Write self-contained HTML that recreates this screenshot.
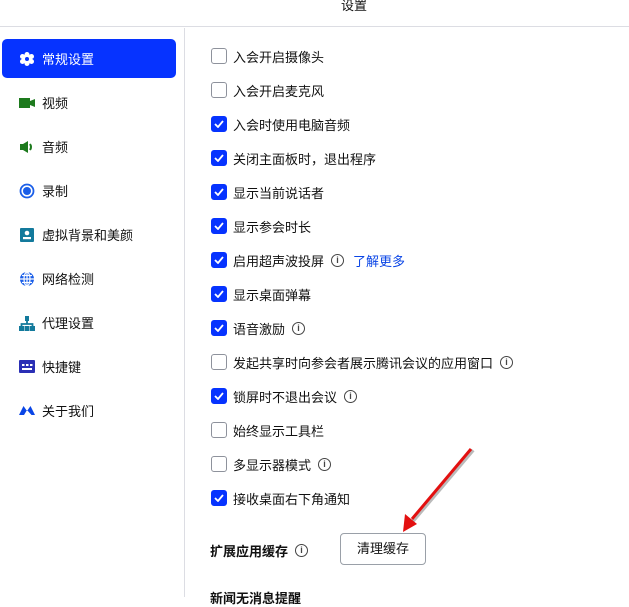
<!DOCTYPE html>
<html><head><meta charset="utf-8"><style>
*{margin:0;padding:0;box-sizing:border-box}
body{width:629px;height:597px;overflow:hidden;background:#fff;font-family:"Liberation Sans","Noto Sans CJK SC",sans-serif;font-size:13px;color:#111;position:relative}
.hdr{position:absolute;left:0;top:0;width:629px;height:27px;border-bottom:1px solid #dcdde3}
.hdr span{position:absolute;left:341px;top:-5px;font-size:13px}
.side{position:absolute;left:0;top:28px;width:185px;height:569px;border-right:1px solid #dcdde3}
.it{position:absolute;left:2px;width:174px;height:39px;display:flex;align-items:center;padding-left:17px}
.it .ic{width:16px;height:16px;margin-right:7px;display:flex;align-items:center;justify-content:center}
.act{background:#0633ff;color:#fff;border-radius:5px}
.row{position:absolute;left:211px;display:flex;align-items:center;height:18px}
.cb{width:16px;height:16px;border:1.5px solid #8e929c;border-radius:3px;margin-right:6px;background:#fff}
.cb.on{background:#0633ff;border-color:#0633ff;display:flex;align-items:center;justify-content:center}
.info{display:inline-block;width:13px;height:13px;border:1.5px solid #444;border-radius:50%;margin-left:7px;font-size:9px;line-height:10px;text-align:center;font-weight:bold;color:#444}
.link{color:#0a45e6;margin-left:9px}
.btn{position:absolute;left:340px;top:533px;width:86px;height:32px;border:1px solid #9aa0a8;border-radius:4px;text-align:center;line-height:30px}
</style></head><body>
<div class="hdr"><span>设置</span></div>
<div class="side">
<div class="it act" style="top:11px"><div class="ic"><svg width="16" height="16"><g fill="#fff"><circle cx="8" cy="8" r="5"/><circle cx="8" cy="3.5" r="2.5"/><circle cx="8" cy="12.5" r="2.5"/><circle cx="3.5" cy="5.5" r="2.5"/><circle cx="12.5" cy="5.5" r="2.5"/><circle cx="3.5" cy="10.5" r="2.5"/><circle cx="12.5" cy="10.5" r="2.5"/></g><circle cx="8" cy="8" r="2" fill="#0633ff"/></svg></div>常规设置</div>
<div class="it" style="top:55px"><div class="ic"><svg width="16" height="12"><rect x="0" y="1" width="11" height="10" fill="#1d7a1d"/><path d="M11 4l5-2v8l-5-2z" fill="#1d7a1d"/></svg></div>视频</div>
<div class="it" style="top:99px"><div class="ic"><svg width="16" height="16"><path d="M1 5h3l5-3v12l-5-3H1z" fill="#1d7a1d"/><path d="M11 5q2 3 0 6" stroke="#1d7a1d" stroke-width="2" fill="none"/></svg></div>音频</div>
<div class="it" style="top:143px"><div class="ic"><svg width="16" height="16"><circle cx="8" cy="8" r="6.5" fill="none" stroke="#1a5ee8" stroke-width="1.8"/><circle cx="8" cy="8" r="4" fill="#1a5ee8"/></svg></div>录制</div>
<div class="it" style="top:187px"><div class="ic"><svg width="16" height="16"><rect x="1" y="1" width="14" height="14" rx="1" fill="#137a9c"/><circle cx="8" cy="6" r="2.3" fill="#fff"/><rect x="4" y="10" width="8" height="2.2" fill="#fff"/></svg></div>虚拟背景和美颜</div>
<div class="it" style="top:231px"><div class="ic"><svg width="16" height="16"><circle cx="8" cy="8" r="7" fill="#1a5ee8"/><path d="M1 8h14M8 1v14M3 4.5h10M3 11.5h10" stroke="#fff" stroke-width="1.2"/><ellipse cx="8" cy="8" rx="3" ry="7" fill="none" stroke="#fff" stroke-width="1.2"/></svg></div>网络检测</div>
<div class="it" style="top:275px"><div class="ic"><svg width="16" height="16"><rect x="6" y="1" width="4" height="5" fill="#137a9c"/><path d="M8 6v3M2.5 11V9h11v2" stroke="#137a9c" stroke-width="1.8" fill="none"/><rect x="0" y="11" width="5" height="5" fill="#137a9c"/><rect x="5.5" y="11" width="5" height="5" fill="#137a9c"/><rect x="11" y="11" width="5" height="5" fill="#137a9c"/></svg></div>代理设置</div>
<div class="it" style="top:319px"><div class="ic"><svg width="16" height="13"><rect x="0" y="0" width="16" height="13" rx="1" fill="#2a2fb5"/><rect x="3" y="4" width="2.5" height="2" fill="#fff"/><rect x="7" y="4" width="2.5" height="2" fill="#fff"/><rect x="11" y="4" width="2.5" height="2" fill="#fff"/><rect x="3" y="8" width="10" height="2" fill="#fff"/></svg></div>快捷键</div>
<div class="it" style="top:363px"><div class="ic"><svg width="16" height="11"><path d="M0 10L4.5 1 8 6l3.5-5L16 10h-3.5L8 5l-3 5z" fill="#0a45e6"/></svg></div>关于我们</div>
</div>

<div class="row" style="top:47px"><div class="cb"></div>入会开启摄像头</div>
<div class="row" style="top:81px"><div class="cb"></div>入会开启麦克风</div>
<div class="row" style="top:115px"><div class="cb on"><svg width="10" height="8"><path d="M1 4l3 3 5-6" stroke="#fff" stroke-width="1.8" fill="none"/></svg></div>入会时使用电脑音频</div>
<div class="row" style="top:149px"><div class="cb on"><svg width="10" height="8"><path d="M1 4l3 3 5-6" stroke="#fff" stroke-width="1.8" fill="none"/></svg></div>关闭主面板时，退出程序</div>
<div class="row" style="top:183px"><div class="cb on"><svg width="10" height="8"><path d="M1 4l3 3 5-6" stroke="#fff" stroke-width="1.8" fill="none"/></svg></div>显示当前说话者</div>
<div class="row" style="top:217px"><div class="cb on"><svg width="10" height="8"><path d="M1 4l3 3 5-6" stroke="#fff" stroke-width="1.8" fill="none"/></svg></div>显示参会时长</div>
<div class="row" style="top:251px"><div class="cb on"><svg width="10" height="8"><path d="M1 4l3 3 5-6" stroke="#fff" stroke-width="1.8" fill="none"/></svg></div>启用超声波投屏<span class="info">i</span><span class="link">了解更多</span></div>
<div class="row" style="top:285px"><div class="cb on"><svg width="10" height="8"><path d="M1 4l3 3 5-6" stroke="#fff" stroke-width="1.8" fill="none"/></svg></div>显示桌面弹幕</div>
<div class="row" style="top:319px"><div class="cb on"><svg width="10" height="8"><path d="M1 4l3 3 5-6" stroke="#fff" stroke-width="1.8" fill="none"/></svg></div>语音激励<span class="info">i</span></div>
<div class="row" style="top:353px"><div class="cb"></div>发起共享时向参会者展示腾讯会议的应用窗口<span class="info">i</span></div>
<div class="row" style="top:387px"><div class="cb on"><svg width="10" height="8"><path d="M1 4l3 3 5-6" stroke="#fff" stroke-width="1.8" fill="none"/></svg></div>锁屏时不退出会议<span class="info">i</span></div>
<div class="row" style="top:421px"><div class="cb"></div>始终显示工具栏</div>
<div class="row" style="top:455px"><div class="cb"></div>多显示器模式<span class="info">i</span></div>
<div class="row" style="top:489px"><div class="cb on"><svg width="10" height="8"><path d="M1 4l3 3 5-6" stroke="#fff" stroke-width="1.8" fill="none"/></svg></div>接收桌面右下角通知</div>

<div style="position:absolute;left:210px;top:541px;font-weight:bold;display:flex;align-items:center">扩展应用缓存<span class="info" style="font-weight:bold">i</span></div>
<div class="btn">清理缓存</div>
<div style="position:absolute;left:210px;top:588px;font-weight:bold">新闻无消息提醒</div>

<svg style="position:absolute;left:0;top:0" width="629" height="597">
<line x1="473" y1="450" x2="412" y2="522" stroke="#777" stroke-width="4" opacity=".5"/>
<line x1="471" y1="449" x2="412" y2="519" stroke="#e31010" stroke-width="3"/>
<path d="M403 532l2-18 12 10z" fill="#e31010"/>
</svg>
</body></html>
